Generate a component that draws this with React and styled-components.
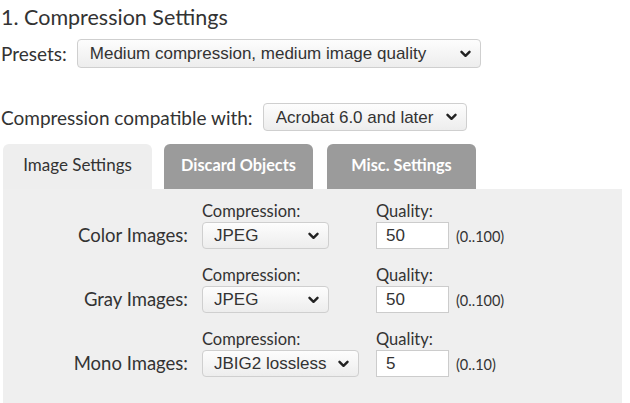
import React, { useState } from 'react';
import styled, { createGlobalStyle } from 'styled-components';

const GlobalStyle = createGlobalStyle`
  body {
    margin: 0;
    background: #fff;
    font-family: Lato, "Open Sans", sans-serif;
    color: #333;
  }
`;

const Page = styled.div`
  width: 630px;
  height: 403px;
  overflow: hidden;
  padding-left: 1px;
  box-sizing: border-box;
`;

const Title = styled.h2`
  margin: 0;
  padding-top: 4px;
  font-size: 21.5px;
  line-height: 26px;
  font-weight: 400;
  color: #333;
`;

const FieldRow = styled.div`
  display: flex;
  align-items: center;
  gap: 10px;
  margin-top: ${p => p.$top}px;
  font-size: 19px;
`;

const SelectWrap = styled.div`
  position: relative;
  display: inline-flex;
`;

const Select = styled.select`
  appearance: none;
  height: ${p => p.$h || 29}px;
  width: ${p => p.$w}px;
  padding: 0 24px 0 ${p => p.$pl || 12}px;
  border: 1px solid #cfcfcf;
  border-radius: 4px;
  background: linear-gradient(#fdfdfd, #ededed);
  font-family: "Liberation Sans", Arial, sans-serif;
  font-size: 17px;
  color: #333;
  box-sizing: border-box;
  outline: none;
`;

const Chevron = styled.svg`
  position: absolute;
  right: 10px;
  top: 50%;
  margin-top: -4px;
  pointer-events: none;
`;

function Dropdown({ w, h, pl, value, options }) {
  return (
    <SelectWrap>
      <Select $w={w} $h={h} $pl={pl} defaultValue={value}>
        {options.map(o => <option key={o}>{o}</option>)}
      </Select>
      <Chevron width="11" height="8" viewBox="0 0 11 8">
        <polyline points="1.5,1.8 5.5,5.8 9.5,1.8" fill="none" stroke="#222" strokeWidth="2.4" strokeLinecap="round" strokeLinejoin="round" />
      </Chevron>
    </SelectWrap>
  );
}

const Tabs = styled.div`
  display: flex;
  gap: 12px;
  margin: 13px 0 0 2px;
`;

const Tab = styled.button`
  width: 149px;
  height: 45px;
  border: none;
  border-radius: 6px 6px 0 0;
  background: ${p => (p.$active ? '#eeeeee' : '#9b9b9b')};
  color: ${p => (p.$active ? '#333' : '#fff')};
  font-family: Lato, sans-serif;
  font-size: ${p => (p.$active ? 17 : 16.3)}px;
  font-weight: ${p => (p.$active ? 400 : 700)};
  padding: 0 0 4px;
  cursor: pointer;
  &:nth-child(3) { margin-left: 2px; }
`;

const Panel = styled.div`
  margin-left: 2px;
  width: 619px;
  height: 214px;
  background: #efefef;
  box-sizing: border-box;
  padding-top: 13px;
  display: grid;
  grid-template-columns: 199px 174px auto;
  align-content: start;
  row-gap: 17px;
`;

const ImageRow = styled.div`
  display: contents;
`;

const RowLabel = styled.div`
  align-self: end;
  text-align: right;
  font-size: 18.5px;
  line-height: 27px;
  padding-right: 14px;
`;

const Cell = styled.div`
  display: flex;
  flex-direction: column;
  align-items: flex-start;
`;

const Caption = styled.div`
  font-size: 16.5px;
  line-height: 19px;
  margin-bottom: 1px;
`;

const Inline = styled.div`
  display: flex;
  align-items: center;
  gap: 7px;
`;

const QualityInput = styled.input`
  width: 73px;
  height: 27px;
  box-sizing: border-box;
  border: 1px solid #ccc;
  background: #fff;
  padding: 0 9px;
  font-family: "Liberation Sans", Arial, sans-serif;
  font-size: 17px;
  color: #333;
  outline: none;
`;

const Range = styled.span`
  font-size: 14.5px;
  color: #333;
  padding-top: 2px;
`;

const rows = [
  { label: 'Color Images:', comp: 'JPEG', w: 127, options: ['JPEG', 'ZIP'], q: '50', range: '(0..100)' },
  { label: 'Gray Images:', comp: 'JPEG', w: 127, options: ['JPEG', 'ZIP'], q: '50', range: '(0..100)' },
  { label: 'Mono Images:', comp: 'JBIG2 lossless', w: 157, options: ['JBIG2 lossless', 'CCITT G4'], q: '5', range: '(0..10)' },
];

export default function App() {
  const [tab, setTab] = useState(0);
  const tabs = ['Image Settings', 'Discard Objects', 'Misc. Settings'];

  return (
    <Page>
      <GlobalStyle />
      <Title>1. Compression Settings</Title>
      <FieldRow $top={9}>
        <span>Presets:</span>
        <Dropdown w={404} h={29} value="Medium compression, medium image quality"
          options={['Medium compression, medium image quality']} />
      </FieldRow>
      <FieldRow $top={35}>
        <span>Compression compatible with:</span>
        <Dropdown w={204} h={28} value="Acrobat 6.0 and later" options={['Acrobat 6.0 and later']} />
      </FieldRow>
      <Tabs>
        {tabs.map((t, i) => (
          <Tab key={t} $active={tab === i} onClick={() => setTab(i)}>{t}</Tab>
        ))}
      </Tabs>
      <Panel>
        {rows.map(r => (
          <ImageRow key={r.label}>
            <RowLabel>{r.label}</RowLabel>
            <Cell>
              <Caption>Compression:</Caption>
              <Dropdown w={r.w} h={27} pl={11} value={r.comp} options={r.options} />
            </Cell>
            <Cell>
              <Caption>Quality:</Caption>
              <Inline>
                <QualityInput defaultValue={r.q} />
                <Range>{r.range}</Range>
              </Inline>
            </Cell>
          </ImageRow>
        ))}
      </Panel>
    </Page>
  );
}
